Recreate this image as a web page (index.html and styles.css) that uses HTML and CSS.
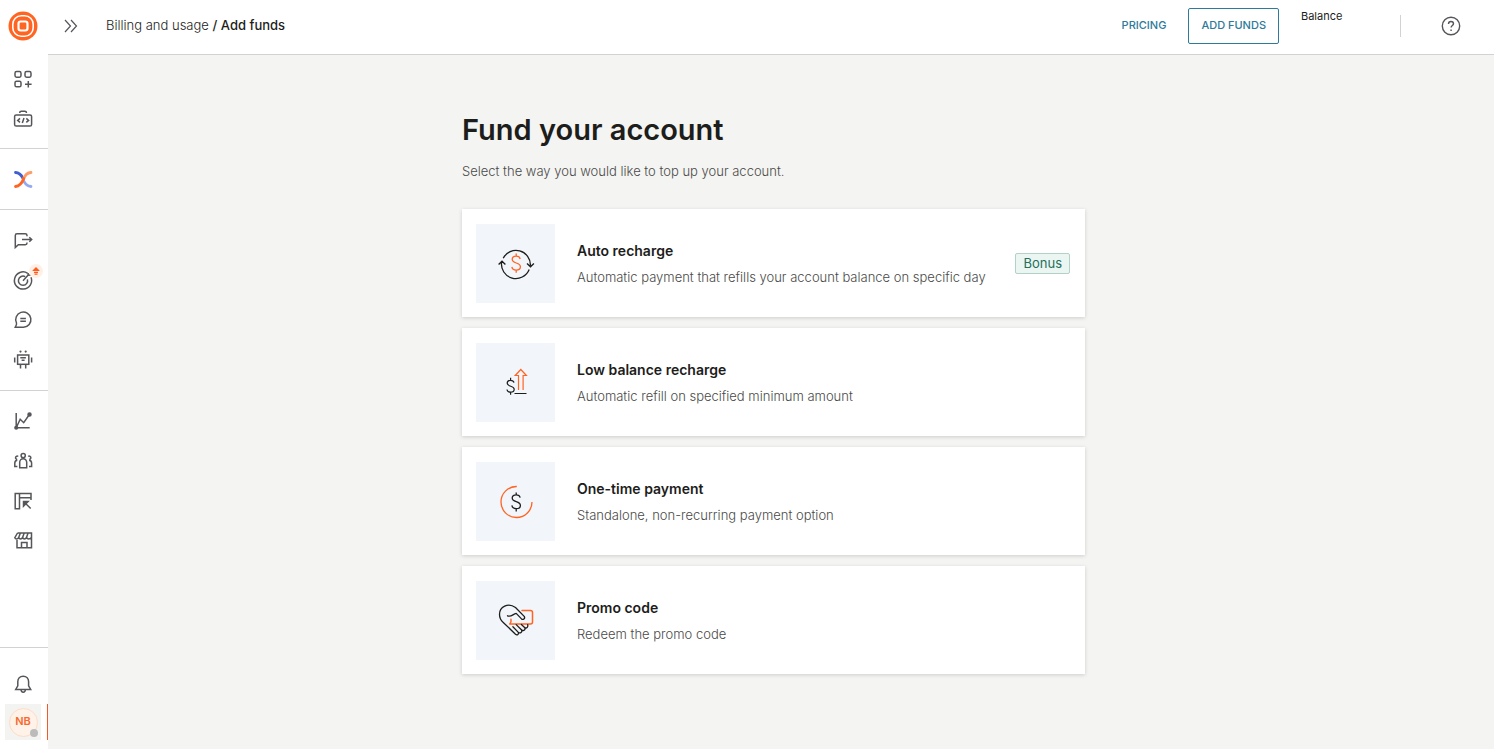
FILE: index.html
```html
<!DOCTYPE html>
<html lang="en">
<head>
<meta charset="utf-8">
<title>Add funds</title>
<link rel="stylesheet" href="styles.css">
</head>
<body>
<div class="app">
  <nav class="sidebar" aria-label="Main">
    <a class="logo" href="#" aria-label="Home">
      <svg width="30" height="30" viewBox="0 0 30 30" fill="none">
        <circle cx="15" cy="15" r="14.5" fill="#ff6422"/>
        <rect x="4.800" y="4.800" width="20.400" height="20.400" rx="8.500" stroke="#fff" stroke-width="1.600"/>
        <rect x="10.500" y="10.500" width="9" height="9" rx="2.200" stroke="#fff" stroke-width="2.200"/>
      </svg>
    </a>
    <div class="group first">
      <a class="item" href="#" aria-label="Apps"><svg class="icon" viewBox="0 0 24 24"><rect x="4" y="4.6" width="6" height="5.6" rx="1.6"/><rect x="14" y="4.6" width="6" height="5.6" rx="1.6"/><rect x="4" y="14.2" width="6" height="5.6" rx="1.6"/><path d="M17.3 14v6.4M14 17.2h6.6"/></svg></a>
      <a class="item" href="#" aria-label="Developer tools"><svg class="icon" viewBox="0 0 24 24"><rect x="3.6" y="8" width="17" height="11" rx="1.6"/><path d="M8.7 5.9c0-1.2.6-1.6 1.600-1.600h3.600c1 0 1.600.400 1.600 1.600M9 11.400l-2.300 2 2.300 2M15.300 11.400l2.300 2-2.300 2M13 10.900l-1.700 5"/></svg></a>
    </div>
    <div class="group">
      <a class="item" href="#" aria-label="Exchange"><svg class="icon mark" viewBox="0 0 24 24"><path d="M4.500 5.500c4 .2 5.500 2 7.300 5.500" stroke="#3f5fd0"/><path d="M12.500 13.500c1.700 3.700 3.700 5.800 7.500 6" stroke="#94a9f2"/><path d="M20 5.500c-4.300.2-6.200 3-7.700 7" stroke="#ff9b66"/><path d="M12.700 11.500c-1.600 4.400-3.700 7.600-8.200 8" stroke="#ff6422"/></svg></a>
    </div>
    <div class="group">
      <a class="item" href="#" aria-label="Channels"><svg class="icon" viewBox="0 0 24 24"><path d="M16 8.300V7.500a1.700 1.700 0 0 0-1.700-1.700H6a1.700 1.700 0 0 0-1.700 1.700v12l3-2.700h7c1 0 1.700-.700 1.700-1.700v-.600M11 11.500h9.500M18.300 9.200l2.400 2.300-2.400 2.300"/></svg></a>
      <a class="item" href="#" aria-label="Campaigns"><svg class="icon" viewBox="0 0 24 24"><path d="M16.700 5.300A8.600 8.600 0 1 0 20 9.300"/><path d="M14.200 8.700a4.600 4.600 0 1 0 2.200 2.700M12 12.700l5.200-5.600M17 7.400l.2-2.400M17.200 7.200l2.500-.1"/></svg>
        <svg class="flag" width="14" height="14" viewBox="0 0 14 14"><circle cx="7" cy="7" r="7" fill="#fff0e6"/><path d="M7 2.900l3.500 3.500v.7h-7v-.7z" fill="#ff5a1c"/><path d="M5 8.400h4M5.500 10.100h3" stroke="#ff5a1c" stroke-width="1.100"/></svg></a>
      <a class="item" href="#" aria-label="Conversations"><svg class="icon" viewBox="0 0 24 24"><path d="M4.300 19.200h8.200a7.600 7.600 0 1 0-7-4.200c.300 1 0 2-1.200 4.200zM9.300 10.500h5.600M9.300 13.200h5.600"/></svg></a>
      <a class="item" href="#" aria-label="Chatbots"><svg class="icon" viewBox="0 0 24 24"><rect x="6.600" y="7" width="11.200" height="9.300"/><path d="M9.300 9.800h5.600M10.600 12.300h3M9.500 16.500v4M14.700 16.500v4M3.700 9.500v5M20.600 9.500v5"/><circle class="dot" cx="9.500" cy="3.600" r="1.100"/><circle class="dot" cx="14.700" cy="3.600" r="1.100"/></svg></a>
    </div>
    <div class="group">
      <a class="item" href="#" aria-label="Analytics"><svg class="icon" viewBox="0 0 24 24"><path d="M5.200 4v14.700h13.500M5.200 18.700l4-8.500 3.500 3.500 5.700-8.200"/><circle class="solid" cx="5.200" cy="18.700" r="1.300"/><circle class="solid" cx="18.500" cy="5.500" r="1.500"/></svg></a>
      <a class="item" href="#" aria-label="People"><svg class="icon" viewBox="0 0 24 24"><circle cx="12.200" cy="6.600" r="2.100"/><path d="M8.700 18.800v-5.600a3.500 3.500 0 0 1 7 0v5.600zM7.200 7.500a1.600 1.600 0 1 0-1 2.800M17.200 7.500a1.600 1.600 0 1 1 1 2.800M6.300 11.200c-1.600.200-2.500 1.200-2.500 2.800v3.500h2.600M18.100 11.200c1.600.200 2.500 1.200 2.500 2.800v3.500H18"/></svg></a>
      <a class="item" href="#" aria-label="Layouts"><svg class="icon" viewBox="0 0 24 24"><path d="M20 11V4.500H4.200v15.200h4.300V4.500M8.500 8.700H20M19.700 19.500l-6.400-6.300"/><path class="solid" d="M12.500 12.500h4.600l-4.600 4.600z"/></svg></a>
      <a class="item" href="#" aria-label="Marketplace"><svg class="icon" viewBox="0 0 24 24"><path d="M6.500 4h14v14.700H6V11M6.500 4l-2.700 4.700c.7 1.700 2.800 1.700 3.800 0 .9 1.600 3 1.600 3.900 0 .9 1.600 3 1.600 3.900 0 1 1.600 4 1.600 5.100-.200M9.300 4.300L7.600 8.700M13.100 4.300l-1.600 4.400M17 4.300l-1.600 4.400M10.500 18.700v-5.300h5.500v5.300"/></svg></a>
    </div>
    <div class="group account">
      <a class="item" href="#" aria-label="Notifications"><svg class="icon" viewBox="0 0 24 24"><path d="M12.200 4.200c-3.300 0-5.400 2.300-5.400 5.500v4.100L4.700 17.500h15l-2.100-3.700V9.700c0-3.200-2.100-5.500-5.400-5.500zM10 17.800c.1 1.600 1 2.400 2.200 2.400s2.100-.8 2.200-2.400"/></svg></a>
      <div class="profile">
        <button class="profile-button" type="button"><span class="avatar">NB</span><span class="status"></span></button>
      </div>
    </div>
  </nav>
  <div class="page">
    <header class="topbar">
      <button class="expand" type="button" aria-label="Expand menu"><svg width="14" height="14" viewBox="0 0 14 14" fill="none" stroke="#55565a" stroke-width="1.200"><path d="M1 1l5.500 6L1 13M7 1l5.500 6L7 13"/></svg></button>
      <div class="crumbs"><a href="#">Billing and usage</a> <b>/ Add funds</b></div>
      <a class="pricing" href="#">PRICING</a>
      <button class="add-funds" type="button">ADD FUNDS</button>
      <div class="balance">Balance</div>
      <button class="help" type="button" aria-label="Help"><svg width="20" height="20" viewBox="0 0 20 20" fill="none" stroke="#55565a" stroke-width="1.400"><circle cx="10" cy="10" r="8.700"/><path d="M7.500 8c0-1.500 1-2.500 2.500-2.500s2.500 1 2.500 2.300c0 1.700-2.400 1.900-2.400 3.800M10.100 13.400v1.500"/></svg></button>
    </header>
    <main class="content">
      <h1>Fund your account</h1>
      <p class="lead">Select the way you would like to top up your account.</p>
      <div class="options">
        <a class="card" href="#">
          <span class="picture"><svg width="40" height="40" viewBox="0 0 40 40" fill="none" stroke="#1d1d1b" stroke-width="1.300"><path d="M7.200 14.300A14.400 14.400 0 0 1 34.400 21.500M33.200 25.500A14.400 14.400 0 0 1 5.600 18M2.600 20.500l3.400-3.300 3.400 3.300M31 19.500l3.500 3.300 3.400-3.300"/><path stroke="#ff6422" d="M24.200 15c-.4-1.900-1.900-2.900-4-2.900-2.300 0-4 1.200-4 3.200 0 4.900 8.200 2.500 8.200 7.500 0 2-1.700 3.300-4.200 3.300-2.300 0-4-1.200-4.300-3.200M20.200 9.500v2.600M20.200 26.100v2.700"/></svg></span>
          <span class="text"><strong>Auto recharge</strong><span>Automatic payment that refills your account balance on specific day</span></span>
          <span class="badge">Bonus</span>
        </a>
        <a class="card" href="#">
          <span class="picture"><svg width="40" height="40" viewBox="0 0 40 40" fill="none" stroke="#1d1d1b" stroke-width="1.200"><path d="M18 19.700c-.4-1.600-1.600-2.400-3.400-2.400-2 0-3.400 1-3.400 2.800 0 4.100 7 2.200 7 6.200 0 1.800-1.500 2.900-3.600 2.900-1.900 0-3.400-1-3.600-2.700M14.600 14.800v2.500M14.600 29.200v2.600M18.500 30.500h12"/><path stroke="#ff6422" stroke-width="1.200" d="M22.500 27V12.500h-3.300L24.800 6.500l5.600 6h-3.300V27"/></svg></span>
          <span class="text"><strong>Low balance recharge</strong><span>Automatic refill on specified minimum amount</span></span>
        </a>
        <a class="card" href="#">
          <span class="picture"><svg width="40" height="40" viewBox="0 0 40 40" fill="none" stroke="#1d1d1b" stroke-width="1.300"><path stroke="#ff6422" d="M20.800 4.500a15.500 15.500 0 1 0 15.200 15.500"/><path d="M24.200 15.700c-.4-1.900-1.900-2.900-4-2.900-2.300 0-4 1.200-4 3.200 0 4.700 8.200 2.500 8.200 7.400 0 2-1.700 3.200-4.200 3.200-2.300 0-4-1.200-4.300-3.200M20.200 10.500v2.300M20.200 26.600v2.800"/></svg></span>
          <span class="text"><strong>One-time payment</strong><span>Standalone, non-recurring payment option</span></span>
        </a>
        <a class="card" href="#">
          <span class="picture"><svg width="40" height="40" viewBox="0 0 40 40" fill="none" stroke="#1d1d1b" stroke-width="1.300" stroke-linejoin="round" stroke-linecap="round"><path stroke="#ff6422" stroke-width="1.500" d="M26 9.500h8.500a2 2 0 0 1 2 2v9.500a2 2 0 0 1-2 2H13.700c1.800-1.600 1.600-3 1.300-4.700"/><path d="M11.500 14.800c3.700 1.800 5.500-2 8.700-2.400l5.300 5.500c1.600 1.300 4-.500 2.700-2.500L19.500 6.500C12 .9 3.500 6 3.500 13.200c0 3.300 1.300 6 3.500 8l12.500 12c1.700 1.500 3.900-.300 2.600-2.100l-5.200-5.300M22.200 31.200c2 1.700 4.600-.300 3.200-2.500l-5.200-5.100M25.700 29c2 1.600 4.200-.500 2.900-2.600l-3.200-2.900M28.900 26.800c2 .7 3.300-1 2.800-3.100"/></svg></span>
          <span class="text"><strong>Promo code</strong><span>Redeem the promo code</span></span>
        </a>
      </div>
    </main>
  </div>
</div>
</body>
</html>
```
FILE: styles.css
```css
* { box-sizing: border-box; }

body {
  margin: 0;
  font: 13px/20px Inter, "Liberation Sans", sans-serif;
  color: #1d1d1b;
  background: #f4f4f2;
}

a { color: inherit; text-decoration: none; }
button { font: inherit; padding: 0; border: 0; background: none; cursor: pointer; }
svg { display: block; }

.app { display: flex; min-height: 100vh; }

.sidebar {
  display: flex;
  flex-direction: column;
  flex: none;
  width: 48px;
  background: #fff;
}
.logo { display: flex; justify-content: center; padding: 11px 2px 7px 0; }
.group { padding: 10px 2px 10px 0; border-bottom: 1px solid #d2d2d0; }
.group.first { padding: 11px 2px 9px 0; }
.group:last-child, .group:nth-last-child(2) { border-bottom: 0; }
.group:nth-last-child(2) { padding-bottom: 0; }
.item { position: relative; display: flex; align-items: center; justify-content: center; height: 40px; }
.icon { width: 24px; height: 24px; fill: none; stroke: #55565a; stroke-width: 1.5; }
.icon .solid { fill: #55565a; }
.icon .dot { fill: #55565a; stroke: none; }
.icon.mark { stroke-width: 2.8; stroke-linecap: round; }
.flag { position: absolute; top: 4px; right: 3px; }
.sidebar .account { margin-top: auto; padding: 16px 0 9px; border-top: 1px solid #d2d2d0; }
.account .item { padding-right: 2px; }
.profile { display: flex; justify-content: space-between; padding-left: 5px; border-right: 1px solid #f05a28; }
.profile-button {
  position: relative;
  display: flex;
  align-items: center;
  justify-content: center;
  width: 36px;
  height: 36px;
  background: #f3f3f1;
}
.avatar {
  width: 29px;
  height: 29px;
  border: 1px solid #ffdcc5;
  border-radius: 50%;
  background: #fff2e8;
  color: #f76a2d;
  font-size: 11px;
  line-height: 25px;
  font-weight: 600;
}
.status {
  position: absolute;
  right: 3px;
  bottom: 3px;
  width: 8px;
  height: 8px;
  border-radius: 50%;
  background: #bbb;
}

.page { flex: 1; min-width: 0; }
.topbar {
  display: flex;
  align-items: center;
  height: 55px;
  padding: 0 33px 3px 16px;
  border-bottom: 1px solid #d2d2d0;
  background: #fff;
}
.crumbs { margin: 0 auto 0 28px; padding-bottom: 2px; font-weight: 300; }
.crumbs b { font-weight: 500; }
.pricing, .add-funds { padding-bottom: 2px; font-size: 11px; font-weight: 500; color: #2d7a9a; }
.add-funds {
  height: 36px;
  margin: 0 22px;
  padding: 0 12px 2px;
  border: 1px solid #2d7a9a;
  border-radius: 2px;
}
.balance {
  width: 100px;
  height: 22px;
  margin-right: 40px;
  border-right: 1px solid #d2d2d0;
  font-size: 11px;
  line-height: 2px;
}

.content { max-width: 628px; margin: 0 auto; padding: 55px 0 40px 5px; }
h1 { margin: 0; font-size: 29px; line-height: 40px; font-weight: 600; }
.lead { margin: 11px 0 28px; font-weight: 300; color: #4a4a48; }
.options { display: grid; gap: 11px; }
.card {
  display: flex;
  align-items: center;
  padding: 15px 15px 14px 14px;
  background: #fff;
  box-shadow: 0 1px 4px rgba(0, 0, 0, .16);
}
.picture {
  display: flex;
  align-items: center;
  justify-content: center;
  width: 79px;
  height: 79px;
  margin-right: 22px;
  background: #f2f5fa;
}
.text { flex: 1; font-weight: 300; color: #4a4a48; }
.text strong { display: block; margin-bottom: 6px; font-size: 14px; font-weight: 600; color: #1d1d1b; }
.text span { display: block; }
.badge {
  height: 21px;
  padding: 0 7px;
  border: 1px solid #b3d1c8;
  border-radius: 2px;
  background: #ebf5f2;
  color: #24705c;
  line-height: 18px;
}
```
